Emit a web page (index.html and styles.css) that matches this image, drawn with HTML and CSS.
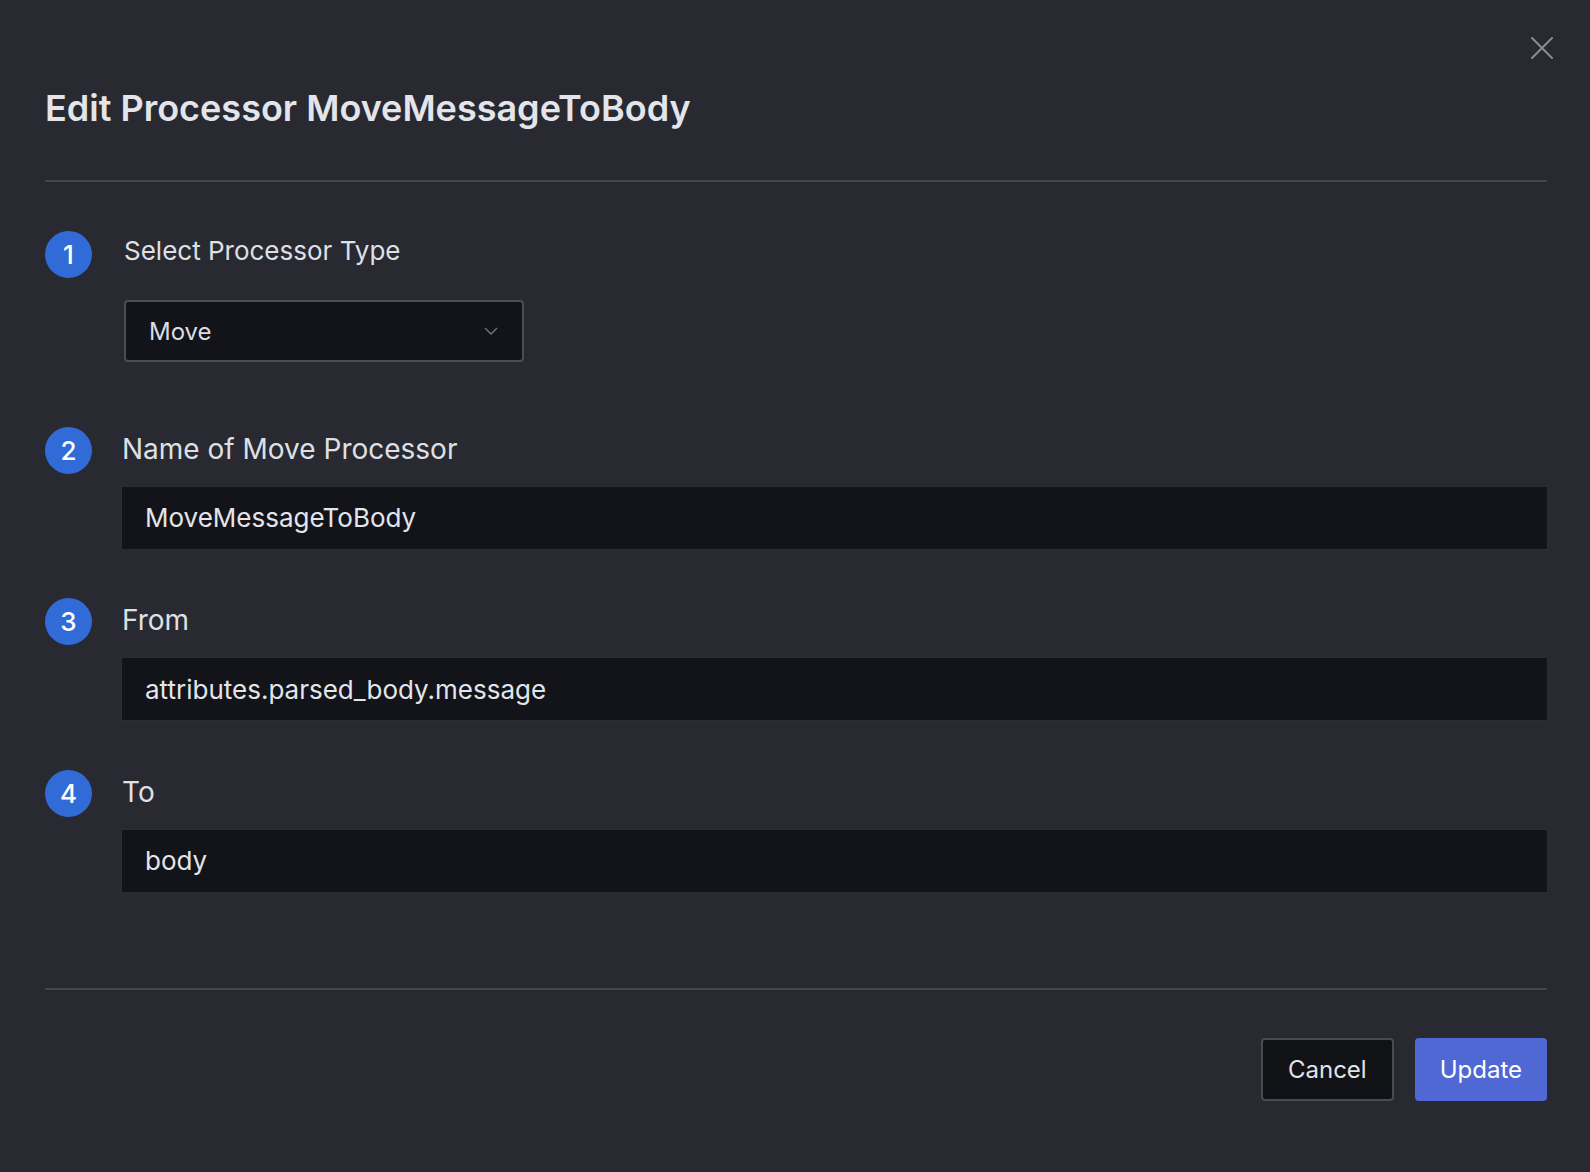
FILE: index.html
```html
<!DOCTYPE html>
<html lang="en">
<head>
<meta charset="utf-8">
<title>Edit Processor</title>
<link rel="stylesheet" href="styles.css">
</head>
<body>
<div class="modal">
  <button class="close" aria-label="Close">
    <svg width="22" height="22" viewBox="0 0 22 22"><path d="M1 1L21 21M21 1L1 21" stroke="#8b8c92" stroke-width="2" fill="none" stroke-linecap="round"/></svg>
  </button>
  <header class="header">
    <h1 class="title">Edit Processor MoveMessageToBody</h1>
  </header>
  <div class="steps">
    <section class="step step-first">
      <div class="badge">1</div>
      <div class="step-content">
        <div class="label label-first">Select Processor Type</div>
        <div class="select">
          <span class="select-value">Move</span>
          <svg class="chevron" width="14" height="8" viewBox="0 0 14 8"><path d="M1 1L7 7L13 1" stroke="#6e6f76" stroke-width="1.5" fill="none"/></svg>
        </div>
      </div>
    </section>
    <section class="step">
      <div class="badge">2</div>
      <div class="step-content">
        <div class="label">Name of Move Processor</div>
        <div class="input">MoveMessageToBody</div>
      </div>
    </section>
    <section class="step">
      <div class="badge">3</div>
      <div class="step-content">
        <div class="label">From</div>
        <div class="input">attributes.parsed_body.message</div>
      </div>
    </section>
    <section class="step">
      <div class="badge">4</div>
      <div class="step-content">
        <div class="label">To</div>
        <div class="input">body</div>
      </div>
    </section>
  </div>
  <footer class="footer">
    <button class="btn btn-cancel">Cancel</button>
    <button class="btn btn-primary">Update</button>
  </footer>
</div>
</body>
</html>
```
FILE: styles.css
```css
* { box-sizing: border-box; }
html, body { margin: 0; padding: 0; }
body {
  background: #282931;
  font-family: Inter, "Noto Sans", sans-serif;
  color: #e2e3e8;
}
.modal {
  position: relative;
  min-height: 1172px;
  padding: 88px 43px 0 45px;
}
.close {
  position: absolute;
  top: 37px;
  right: 37px;
  width: 22px;
  height: 22px;
  padding: 0;
  border: 0;
  background: none;
  display: flex;
}
.header {
  padding-bottom: 52px;
  border-bottom: 2px solid #45464d;
}
.title {
  margin: 0;
  font-size: 36px;
  line-height: 40px;
  font-weight: 600;
  color: #e4e5ea;
}
.steps {
  display: flex;
  flex-direction: column;
  gap: 49.5px;
  padding: 49px 0 96px;
}
.step {
  display: grid;
  grid-template-columns: 47px 1fr;
  column-gap: 30px;
}
.step-first { margin-bottom: 15px; }
.badge {
  width: 47px;
  height: 47px;
  border-radius: 50%;
  background: #316bd8;
  color: #fff;
  font-size: 26px;
  font-weight: 500;
  display: flex;
  align-items: center;
  justify-content: center;
}
.label {
  margin-top: 6px;
  font-size: 28px;
  line-height: 32px;
  color: #dfe0e5;
}
.label-first {
  margin-top: 4px;
  margin-left: 2px;
  font-size: 26px;
}
.select {
  margin-top: 33px;
  margin-left: 2px;
  width: 400px;
  height: 62px;
  background: #131419;
  border: 2px solid #4c4d54;
  border-radius: 4px;
  display: flex;
  align-items: center;
  justify-content: space-between;
  padding: 0 24px 0 23px;
}
.select-value {
  font-size: 24px;
  color: #dcdde2;
}
.input {
  margin-top: 22px;
  height: 62px;
  background: #131419;
  box-shadow: 0 0 0 1px #2d2e35;
  display: flex;
  align-items: center;
  padding: 0 23px;
  font-size: 26px;
  color: #e4e5ea;
}
.footer {
  border-top: 2px solid #45464d;
  padding-top: 48px;
  display: flex;
  justify-content: flex-end;
  gap: 21px;
}
.btn {
  height: 63px;
  padding: 0 25px;
  font-family: inherit;
  font-size: 24px;
  border-radius: 4px;
  cursor: pointer;
}
.btn-cancel {
  background: #111216;
  border: 2px solid #4a4b52;
  color: #e2e3e8;
}
.btn-primary {
  background: #4f68d3;
  border: 0;
  color: #fff;
}
```
